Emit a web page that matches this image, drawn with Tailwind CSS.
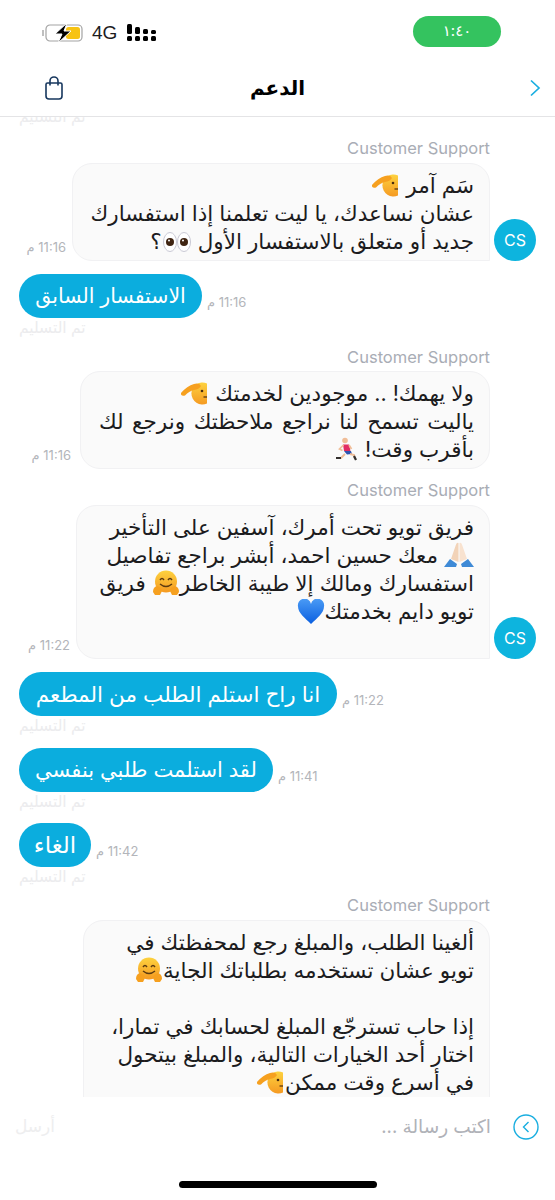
<!DOCTYPE html>
<html lang="ar">
<head>
    <meta charset="UTF-8" />
    <meta name="viewport" content="width=device-width, initial-scale=1.0" />
    <title>الدعم</title>
    <script src="https://cdn.jsdelivr.net/npm/@tailwindcss/browser@4"></script>
</head>
<body class="bg-white font-['Inter','DejaVu_Sans',sans-serif] text-[#1c1c1e]">
<div class="w-[555px] h-[1200px] flex flex-col overflow-hidden relative">

    <!-- STATUS BAR -->
    <div class="h-[60px] shrink-0 flex items-center justify-between pl-[42px] pr-[54px] pt-[2px]">
        <div class="flex items-center gap-[9px] mt-[4px]">
            <svg width="41" height="20" viewBox="0 0 41 20">
                <path d="M1 7v6" stroke="#aaa" stroke-width="1.5" fill="none"/>
                <rect x="4" y="2" width="36" height="16" rx="4" fill="#fff" stroke="#a3a3a3" stroke-width="1.2"/>
                <rect x="24" y="4" width="14" height="12" rx="2.5" fill="#f7c313"/>
                <path d="M25 0 13 11h7l-4 9 13-12h-7z" fill="#000" stroke="#fff" stroke-width="1"/>
            </svg>
            <span class="text-[19px] font-medium font-['Liberation_Sans']">4G</span>
            <svg width="30" height="20" viewBox="0 0 30 20" class="ml-[1px]">
                <g fill="#000">
                    <rect x="0" y="1" width="5" height="10" rx="1.5"/><rect x="0" y="13" width="5" height="5" rx="1.5"/>
                    <rect x="8" y="4" width="5" height="7" rx="1.5"/><rect x="8" y="13" width="5" height="5" rx="1.5"/>
                    <rect x="16" y="6" width="5" height="5" rx="1.5"/><rect x="16" y="13" width="5" height="5" rx="1.5"/>
                    <rect x="24" y="7" width="5" height="4" rx="1.5"/><rect x="24" y="13" width="5" height="5" rx="1.5"/>
                </g>
            </svg>
        </div>
        <div class="w-[88px] h-[31px] rounded-full bg-[#34c35f] text-white text-[15px] flex items-center justify-center">١:٤٠</div>
    </div>

    <!-- NAV -->
    <div class="h-[57px] shrink-0 border-b border-[#e4e4e6] flex items-center pl-[44px] pr-[14px]">
        <div class="flex-1">
            <svg width="20" height="24" viewBox="0 0 20 24" fill="none" stroke="#17375e" stroke-width="1.6">
                <path d="M3.5 7h13a1.5 1.5 0 0 1 1.5 1.5V20a3 3 0 0 1-3 3H5a3 3 0 0 1-3-3V8.500A1.500 1.500 0 0 1 3.500 7z"/>
                <path d="M6 9.500V5a4 4 0 0 1 8 0v4.500"/>
            </svg>
        </div>
        <span class="text-[20px] font-bold text-black mr-[30px]">الدعم</span>
        <div class="flex-1 flex justify-end">
            <svg width="12" height="18" viewBox="0 0 12 18" fill="none" stroke="#19aee0" stroke-width="1.700"><path d="M2 1.500 10 9l-8 7.500"/></svg>
        </div>
    </div>

    <!-- MESSAGES -->
    <div class="flex-1 overflow-hidden flex flex-col text-[21.5px] leading-[28px]">
        <div class="h-[10px] -mt-[9px] mb-[20px] pl-[19px] text-[15.5px] leading-[18px] text-[#ececee]">تم التسليم</div>

        <p class="text-[16.5px] leading-[20px] text-[#a9adb5] text-right pr-[65px] mb-[5px]">Customer Support</p>
        <div class="flex items-end justify-end pr-[19px]">
            <span dir="rtl" class="text-[13px] leading-[16px] text-[#b3b5ba] mr-[6px] mb-[6px]">11:16 م</span>
            <div dir="rtl" class="w-[418px] h-[98px] rounded-[20px] rounded-br-none bg-[#fafafa] border border-[#f1f1f3] px-[15px] pt-[7px]">
                سَم آمر <svg class="inline w-[30px] h-[26px] align-[-5px]" viewBox="0 0 30 26"><use href="#salute"/></svg><br>عشان نساعدك، يا ليت تعلمنا إذا استفسارك<br>جديد أو متعلق بالاستفسار الأول <svg class="inline w-[30px] h-[22px] align-[-4px]" viewBox="0 0 30 22"><use href="#eyes"/></svg>؟
            </div>
            <div class="w-[42px] h-[42px] rounded-full bg-[#0db4de] text-white text-[16px] flex items-center justify-center ml-[4px]">CS</div>
        </div>

        <div class="flex items-center pl-[19px] mt-[13px]">
            <div class="w-[183px] h-[44px] rounded-full bg-[#0badde] text-white text-[20.5px] flex items-center justify-center">الاستفسار السابق</div>
            <span dir="rtl" class="text-[13px] text-[#b3b5ba] ml-[5px] mt-[12px]">11:16 م</span>
        </div>
        <p class="text-[15.5px] leading-[18px] text-[#ececee] pl-[19px] mt-[1px] mb-[10px]">تم التسليم</p>

        <p class="text-[16.5px] leading-[20px] text-[#a9adb5] text-right pr-[65px] mb-[4px]">Customer Support</p>
        <div class="flex items-end justify-end pr-[65px]">
            <span dir="rtl" class="text-[13px] leading-[16px] text-[#b3b5ba] mr-[9px] mb-[6px]">11:16 م</span>
            <div dir="rtl" class="w-[410px] h-[98px] rounded-[20px] bg-[#fafafa] border border-[#f1f1f3] px-[15px] pt-[7px]">
                ولا يهمك! .. موجودين لخدمتك <svg class="inline w-[30px] h-[26px] align-[-5px]" viewBox="0 0 30 26"><use href="#salute"/></svg><br><span class="[word-spacing:2.5px]">ياليت تسمح لنا نراجع ملاحظتك ونرجع لك</span><br>بأقرب وقت! <svg class="inline w-[24px] h-[24px] align-[-4px]" viewBox="0 0 24 24"><use href="#runner"/></svg>
            </div>
        </div>

        <p class="text-[16.5px] leading-[20px] text-[#a9adb5] text-right pr-[65px] mt-[11px] mb-[5px]">Customer Support</p>
        <div class="flex items-end justify-end pr-[19px]">
            <span dir="rtl" class="text-[13px] leading-[16px] text-[#b3b5ba] mr-[6px] mb-[6px]">11:22 م</span>
            <div dir="rtl" class="w-[414px] h-[154px] rounded-[20px] rounded-br-none bg-[#fafafa] border border-[#f1f1f3] px-[15px] pt-[7px]">
                فريق تويو تحت أمرك، آسفين على التأخير<br><svg class="inline w-[30px] h-[26px] align-[-5px]" viewBox="0 0 30 26"><use href="#pray"/></svg> معك حسين احمد، أبشر براجع تفاصيل<br>استفسارك ومالك إلا طيبة الخاطر<svg class="inline w-[28px] h-[26px] align-[-5px]" viewBox="0 0 28 26"><use href="#hug"/></svg> فريق<br>تويو دايم بخدمتك<svg class="inline w-[28px] h-[26px] align-[-6px]" viewBox="0 0 28 26"><use href="#heart"/></svg>
            </div>
            <div class="w-[42px] h-[42px] rounded-full bg-[#0db4de] text-white text-[16px] flex items-center justify-center ml-[4px]">CS</div>
        </div>

        <div class="flex items-center pl-[19px] mt-[13px]">
            <div class="w-[318px] h-[44px] rounded-full bg-[#0badde] text-white flex items-center justify-center">انا راح استلم الطلب من المطعم</div>
            <span dir="rtl" class="text-[13px] text-[#b3b5ba] ml-[5px] mt-[12px]">11:22 م</span>
        </div>
        <p class="text-[15.5px] leading-[18px] text-[#ececee] pl-[19px] mt-[1px] mb-[13px]">تم التسليم</p>

        <div class="flex items-center pl-[19px]">
            <div class="w-[254px] h-[44px] rounded-full bg-[#0badde] text-white text-[21px] flex items-center justify-center">لقد استلمت طلبي بنفسي</div>
            <span dir="rtl" class="text-[13px] text-[#b3b5ba] ml-[5px] mt-[12px]">11:41 م</span>
        </div>
        <p class="text-[15.5px] leading-[18px] text-[#ececee] pl-[19px] mt-[1px] mb-[12px]">تم التسليم</p>

        <div class="flex items-center pl-[19px]">
            <div class="w-[72px] h-[44px] rounded-full bg-[#0badde] text-white text-[23px] flex items-center justify-center">الغاء</div>
            <span dir="rtl" class="text-[13px] text-[#b3b5ba] ml-[5px] mt-[12px]">11:42 م</span>
        </div>
        <p class="text-[15.5px] leading-[18px] text-[#ececee] pl-[19px] mt-[1px] mb-[9px]">تم التسليم</p>

        <p class="text-[16.5px] leading-[20px] text-[#a9adb5] text-right pr-[65px] mb-[5px]">Customer Support</p>
        <div class="flex justify-end pr-[65px]">
            <div dir="rtl" class="w-[407px] h-[260px] shrink-0 rounded-[20px] bg-[#fafafa] border border-[#f1f1f3] px-[15px] pt-[7px]">
                ألغينا الطلب، والمبلغ رجع لمحفظتك في<br>تويو عشان تستخدمه بطلباتك الجاية<svg class="inline w-[28px] h-[26px] align-[-5px]" viewBox="0 0 28 26"><use href="#hug"/></svg><br><br>إذا حاب تسترجّع المبلغ لحسابك في تمارا،<br>اختار أحد الخيارات التالية، والمبلغ بيتحول<br>في أسرع وقت ممكن<svg class="inline w-[30px] h-[26px] align-[-5px]" viewBox="0 0 30 26"><use href="#salute"/></svg>
            </div>
        </div>
    </div>

    <!-- INPUT -->
    <div class="h-[60px] shrink-0 bg-white flex items-center justify-between pl-[15px] pr-[16px]">
        <span class="text-[17px] text-[#eeeeef]">أرسل</span>
        <div class="flex items-center gap-[22px]">
            <span dir="rtl" class="text-[18.5px] text-[#b0b2b8]">اكتب رسالة ...</span>
            <svg width="26" height="26" viewBox="0 0 26 26" fill="none" stroke="#19aee0" stroke-width="1.400"><circle cx="13" cy="13" r="12"/><path d="M15.500 8 10.500 13l5 5"/></svg>
        </div>
    </div>
    <div class="h-[43px] shrink-0 bg-white flex justify-center pt-[24px]">
        <div class="w-[198px] h-[7px] rounded-full bg-black"></div>
    </div>

    <!-- EMOJI -->
    <svg width="0" height="0" class="absolute">
        <defs>
            <linearGradient id="faceFill" x1="0" y1="0" x2="0" y2="1"><stop offset="0" stop-color="#fdd23f"/><stop offset="1" stop-color="#f59a22"/></linearGradient>
            <linearGradient id="heartFill" x1="0" y1="0" x2="0" y2="1"><stop offset="0" stop-color="#4a9bf5"/><stop offset="1" stop-color="#0a5fe0"/></linearGradient>
            <g id="salute">
                <path d="M28 3.500A11 11 0 1 0 28 23.500z" fill="url(#faceFill)"/>
                <circle cx="23" cy="11" r="1.300" fill="#4a2d10"/><path d="M24.500 17H28" stroke="#4a2d10" stroke-width="1.200"/>
                <path d="M2 13Q8 6 15 4Q20 2.500 22 6Q20 9.500 15 10Q10 11 6 15.500Q1.500 16.500 2 13z" fill="#f6a01f"/>
            </g>
            <g id="eyes">
                <ellipse cx="8" cy="11" rx="6.500" ry="9.500" fill="#fff" stroke="#c8c8d4"/><ellipse cx="22" cy="11" rx="6.500" ry="9.500" fill="#fff" stroke="#c8c8d4"/>
                <circle cx="8" cy="11" r="4" fill="#3f2411"/><circle cx="22" cy="11" r="4" fill="#3f2411"/>
                <circle cx="7" cy="9.500" r="1" fill="#fff"/><circle cx="21" cy="9.500" r="1" fill="#fff"/>
            </g>
            <g id="runner">
                <circle cx="10" cy="3.500" r="2.800" fill="#f0bd97"/>
                <path d="M8 7.500h6l1.500 6.500H9z" fill="#e22c62"/>
                <path d="M9 14h7l1 3-5 .5z" fill="#2f55b0"/>
                <path d="M10 17l-4 4H2M15 17l4 1 1 4" stroke="#f0bd97" stroke-width="2" fill="none"/>
                <path d="M1 21h5M19 19l2 4" stroke="#33302e" stroke-width="2.200"/>
                <path d="M8.500 8 4.500 12l3 1.500M14 8l2.500 4" stroke="#f0bd97" stroke-width="1.700" fill="none"/>
            </g>
            <g id="pray">
                <path d="M14.500 1Q12.500 0 11.500 4L7 17l7.500 3z" fill="#f2d3b8"/><path d="M15.500 1Q17.500 0 18.500 4L23 17l-7.500 3z" fill="#f8e2cf"/>
                <path d="M0 25l6-8 7 5-1 3zM30 25l-6-8-7 5 1 3z" fill="#3f8ad6"/>
            </g>
            <g id="hug">
                <circle cx="14" cy="11.500" r="11" fill="url(#faceFill)"/>
                <path d="M8 10q2-3 4 0M16 10q2-3 4 0" stroke="#5b3a10" stroke-width="1.400" fill="none"/>
                <path d="M8 14q6 5 12 0" stroke="#5b3a10" stroke-width="1.400" fill="none"/>
                <path d="M1 22q0-5 4-6l4 2 1 3-2 4H3zM27 22q0-5-4-6l-4 2-1 3 2 4h5z" fill="#f6a01f"/>
            </g>
            <g id="heart">
                <path d="M14 25C8 19 1 14 1 7.500A6.500 6.500 0 0 1 14 5a6.500 6.500 0 0 1 13 2.500C27 14 20 19 14 25z" fill="url(#heartFill)"/>
            </g>
        </defs>
    </svg>
</div>
</body>
</html>
